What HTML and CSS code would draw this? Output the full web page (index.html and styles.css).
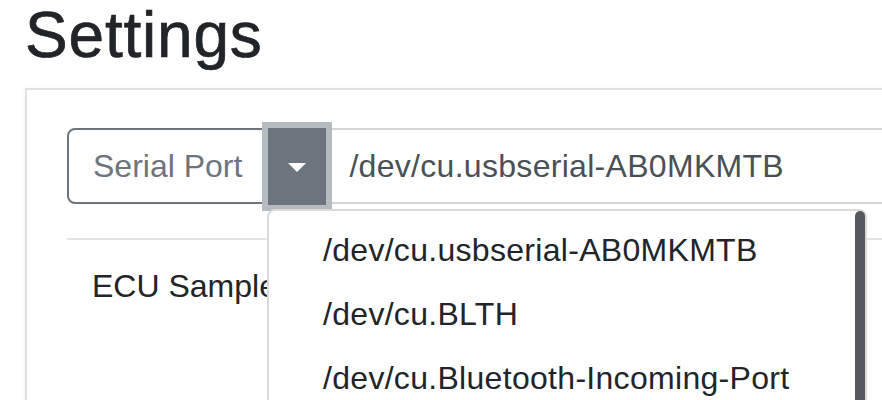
FILE: index.html
```html
<!DOCTYPE html>
<html lang="en">
<head>
<meta charset="utf-8">
<title>Settings</title>
<link rel="stylesheet" href="styles.css">
</head>
<body>
  <h1 class="title">Settings</h1>
  <div class="card">
    <div class="input-group">
      <span class="group-label">Serial Port</span>
      <button class="toggle" type="button" aria-label="Choose port"><span class="caret"></span></button>
      <div class="port-input">/dev/cu.usbserial-AB0MKMTB</div>
      <div class="menu">
        <div class="menu-item">/dev/cu.usbserial-AB0MKMTB</div>
        <div class="menu-item">/dev/cu.BLTH</div>
        <div class="menu-item">/dev/cu.Bluetooth-Incoming-Port</div>
        <div class="scroll-thumb"></div>
      </div>
    </div>
    <div class="row">ECU Sample Rate</div>
  </div>
</body>
</html>
```

FILE: styles.css
```css
html, body {
  margin: 0;
  height: 100%;
  overflow: hidden;
  background: #ffffff;
}

body {
  padding: 3px 0 0 25px;
  box-sizing: border-box;
  font-family: "Liberation Sans", Arial, Helvetica, sans-serif;
  color: #212529;
}

.title {
  margin: 0;
  font-size: 64px;
  line-height: 64px;
  font-weight: normal;
  letter-spacing: 0.8px;
  color: #212529;
  -webkit-text-stroke: 0.7px #212529;
}

.card {
  margin-top: 21px;
  width: 960px;
  height: 400px;
  border: 2px solid #e0e0e0;
  border-right: none;
  padding: 38px 0 0 40px;
  box-sizing: border-box;
  box-shadow: -2px 0 4px rgba(0, 0, 0, 0.03);
}

.input-group {
  position: relative;
  display: flex;
  height: 76px;
  font-size: 32px;
}

.group-label {
  display: flex;
  align-items: center;
  padding: 0 24px;
  border: 2px solid #6c757d;
  border-radius: 8px 0 0 8px;
  color: #6c757d;
  box-sizing: border-box;
}

.toggle {
  position: relative;
  z-index: 2;
  width: 58px;
  height: 77px;
  margin: 0;
  padding: 0;
  border: none;
  background: #6c757d;
  box-shadow: 0 0 0 6px #b6bbbf;
  display: flex;
  align-items: center;
  justify-content: center;
}

.caret {
  width: 0;
  height: 0;
  border-top: 9px solid #ffffff;
  border-left: 9.5px solid transparent;
  border-right: 9.5px solid transparent;
  margin-top: 1px;
}

.port-input {
  flex: 1;
  display: flex;
  align-items: center;
  padding-left: 23px;
  border-top: 2px solid #d3d6d9;
  border-bottom: 2px solid #d3d6d9;
  color: #495057;
  line-height: 48px;
  letter-spacing: 0.3px;
}

.menu {
  position: absolute;
  z-index: 3;
  top: 81px;
  left: 200px;
  width: 600px;
  height: 300px;
  padding-top: 7px;
  border: 2px solid #dadada;
  border-radius: 8px 8px 0 0;
  background: #ffffff;
  box-sizing: border-box;
}

.menu-item {
  padding: 8px 0 8px 54px;
  line-height: 48px;
  color: #212529;
  white-space: nowrap;
  letter-spacing: 0.3px;
}

.scroll-thumb {
  position: absolute;
  top: 0;
  right: 0;
  width: 10px;
  height: 300px;
  background: #54585f;
  border-radius: 5px 5px 0 0;
}

.row {
  margin-top: 34px;
  border-top: 2px solid #e2e4e6;
  padding: 22px 0 0 25px;
  font-size: 32px;
  line-height: 48px;
  color: #212529;
}
```
